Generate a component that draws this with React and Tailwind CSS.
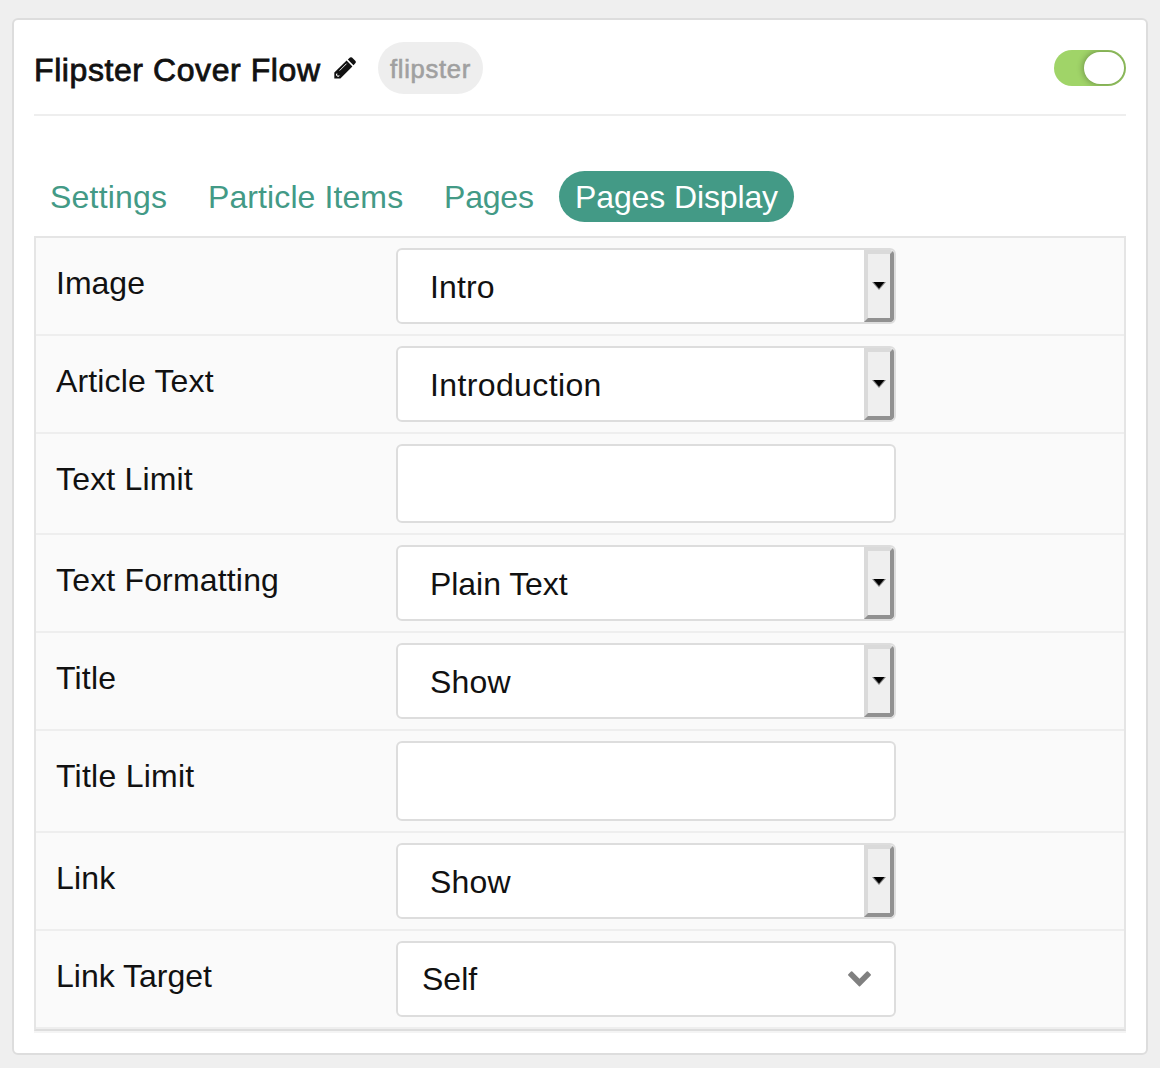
import React from "react";

const rows = [
  { label: "Image", value: "Intro", kind: "combo", h: "h-[98px]", valueTrack: "tracking-[0.1px]" },
  { label: "Article Text", value: "Introduction", kind: "combo", h: "h-[98px]", track: "tracking-[0.15px]", valueTrack: "tracking-[0.38px]" },
  { label: "Text Limit", kind: "input", h: "h-[101px]", box: "h-[79px]", track: "tracking-[0.17px]" },
  { label: "Text Formatting", value: "Plain Text", kind: "combo", h: "h-[98px]", track: "tracking-[0.17px]", valueTrack: "tracking-[-0.05px]" },
  { label: "Title", value: "Show", kind: "combo", h: "h-[98px]", track: "tracking-[0.2px]", valueTrack: "tracking-[0.2px]" },
  { label: "Title Limit", kind: "input", h: "h-[102px]", box: "h-[80px]", track: "tracking-[0.25px]" },
  { label: "Link", value: "Show", kind: "combo", h: "h-[98px]", track: "tracking-[0.2px]", valueTrack: "tracking-[0.2px]" },
  { label: "Link Target", value: "Self", kind: "select", h: "h-[98px]" },
];

const tabs = [
  { label: "Settings", w: "w-[158px]", track: "tracking-[0.2px]" },
  { label: "Particle Items", w: "w-[236px]", track: "tracking-[0.1px]" },
  { label: "Pages", w: "w-[104px]", track: "tracking-[-0.2px]" },
  { label: "Pages Display", w: "w-[235px]", track: "tracking-[-0.12px]", active: true },
];

function Combo({ value, track = "" }) {
  return (
    <div className="flex h-[76px] w-[500px] overflow-hidden rounded-[6px] border-2 border-[#ddd] bg-white">
      <span className={`flex-1 pl-8 pt-[13px] text-[32px] leading-[48px] text-[#111] ${track}`}>{value}</span>
      <span className="flex h-[72px] w-[30px] items-center justify-center rounded-r-[4px] border-4 border-b-[#919191] border-l-[#dadada] border-r-[#919191] border-t-[#dadada] bg-[#efefef]">
        <svg width="14" height="8" viewBox="0 0 14 8" className="shrink-0">
          <path d="M0 0H14L7 8Z" fill="#000" fillOpacity="0.45" />
          <path d="M1.5 0H12.5L7 6.6Z" fill="#000" />
        </svg>
      </span>
    </div>
  );
}

function Select({ value }) {
  return (
    <div className="flex h-[76px] w-[500px] items-center justify-between rounded-[6px] border-2 border-[#ddd] bg-white pl-6 pr-[22px]">
      <span className="text-[32px] leading-[48px] text-[#111]">{value}</span>
      <svg width="24" height="16" viewBox="0 0 24 16">
        <path
          d="M0.3 3.3L3 0.6Q3.7 0.1 4.3 0.6L11.5 7.8L18.7 0.6Q19.3 0.1 20 0.6L22.7 3.3Q23.2 4 22.7 4.6L12.1 15.2Q11.5 15.7 10.9 15.2L0.3 4.6Q-0.2 4 0.3 3.3Z"
          fill="#808080"
        />
      </svg>
    </div>
  );
}

function Field({ row }) {
  if (row.kind === "combo") return <Combo value={row.value} track={row.valueTrack} />;
  if (row.kind === "select") return <Select value={row.value} />;
  return <div className={`w-[500px] rounded-[6px] border-2 border-[#ddd] bg-white ${row.box}`} />;
}

export default function App() {
  return (
    <div className="h-[1068px] w-[1160px] bg-[#efefef] pl-3 pt-[18px] font-['Liberation_Sans',Arial,sans-serif] text-[#111]">
      <div className="h-[1037px] w-[1136px] rounded-[6px] border-2 border-[#ddd] bg-white px-5">
        <header className="flex h-24 items-start border-b-2 border-[#eee]">
          <h1 className="w-[300px] whitespace-nowrap pt-[26px] text-[32px] leading-[48px] tracking-[0.58px] [-webkit-text-stroke:0.8px_#111]">
            Flipster Cover Flow
          </h1>
          <svg className="mt-[37px]" width="22" height="22" viewBox="0 0 22 22">
            <path d="M12.6 3.6L18.4 9.4L6.4 21.4H0.3V15.6Z" fill="#111" />
            <path d="M13.8 2.5L16 0.5Q17 -0.2 18 0.5L21.5 4Q22.2 5 21.5 6L19.5 8.2Z" fill="#111" />
            <path d="M5.6 13.6L12.5 6.7" stroke="#fff" strokeWidth="0.9" />
            <path d="M2 17.2L3.2 16V18.6H5.9L4.7 19.8H3.6L2 18.3Z" fill="#fff" />
          </svg>
          <span className="ml-[22px] mt-[22px] flex h-[52px] w-[105px] items-center justify-center rounded-full bg-[#eee] pt-[2px] text-[25.6px] leading-[52px] tracking-[0.7px] text-[#a0a0a0] [-webkit-text-stroke:0.6px_#a0a0a0]">
            flipster
          </span>
          <span className="ml-auto mt-[30px] flex h-9 w-[72px] items-center justify-end overflow-hidden rounded-full bg-[#a0d468] pr-[2px]">
            <span className="h-8 w-10 rounded-full bg-white shadow-[0_0_6px_1px_rgba(0,0,0,0.3)]" />
          </span>
        </header>

        <nav className="mt-[55px] flex h-[51px]">
          {tabs.map((t) => (
            <span
              key={t.label}
              className={`h-[51px] whitespace-nowrap rounded-full pl-4 pt-px text-[32px] leading-[51px] ${t.w} ${t.track} ${t.active ? "ml-[27px] bg-[#439a86] text-white" : "text-[#439a86]"}`}
            >
              {t.label}
            </span>
          ))}
        </nav>

        <section className="mt-[14px] border-2 border-[#e5e5e5] border-b-[#ddd] bg-[#fafafa] shadow-[0_2px_0_#f4f4f4]">
          {rows.map((r) => (
            <div key={r.label} className={`flex border-b-2 border-[#eee] pl-5 pt-[10px] ${r.h}`}>
              <span className={`w-[340px] pt-[11px] text-[32px] leading-[48px] ${r.track || ""}`}>{r.label}</span>
              <Field row={r} />
            </div>
          ))}
        </section>
      </div>
    </div>
  );
}
